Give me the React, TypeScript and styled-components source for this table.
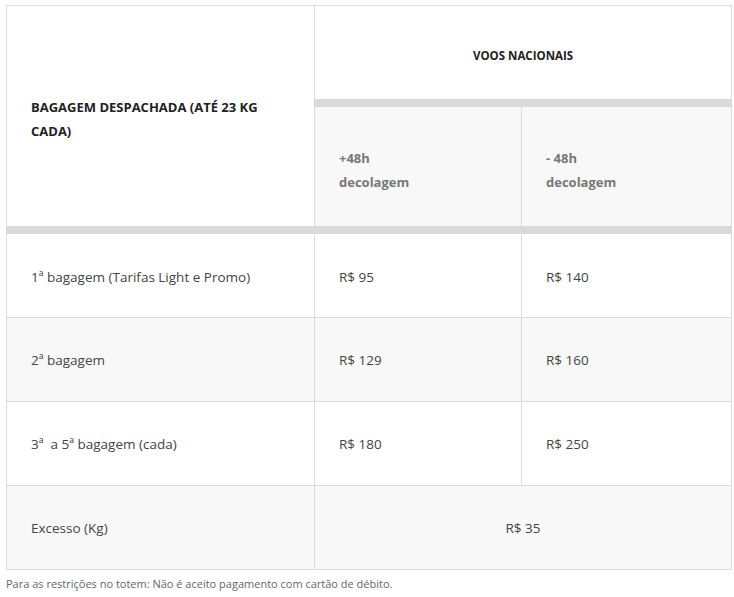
import React from "react";
import styled, { createGlobalStyle } from "styled-components";

const Global = createGlobalStyle`
  html, body { margin: 0; padding: 0; background: #fff; }
  body { font-family: "Open Sans", "Noto Sans", sans-serif; }
`;

const Page = styled.div`
  padding: 5px 0 0 6px;
`;

const Table = styled.table`
  border-collapse: collapse;
  width: 725px;
  table-layout: fixed;
  font-size: 13.5px;
  color: #444;
`;

const HeadRow = styled.tr<{ $h: number }>`
  height: ${(p) => p.$h}px;
`;

const HeadCell = styled.th<{ $center?: boolean; $shade?: boolean; $top?: number }>`
  border: 1px solid #dcdcdc;
  border-bottom: 8px solid #dadada;
  background: ${(p) => (p.$shade ? "#f8f8f8" : "#fff")};
  text-align: ${(p) => (p.$center ? "center" : "left")};
  padding: ${(p) => p.$top ?? 0}px 24px 0 24px;
  font-weight: 700;
  line-height: 24px;
  vertical-align: middle;
`;

const Title = styled.span<{ $small?: boolean }>`
  color: #222;
  font-size: ${(p) => (p.$small ? "11.5px" : "13px")};
  text-transform: uppercase;
`;

const Sub = styled.span`
  color: #777;
  font-size: 13px;
`;

const Row = styled.tr<{ $shade?: boolean; $first?: boolean }>`
  height: ${(p) => (p.$first ? 88 : 84)}px;
  background: ${(p) => (p.$shade ? "#f8f8f8" : "#fff")};
`;

const Cell = styled.td<{ $center?: boolean; $first?: boolean }>`
  border: 1px solid #dcdcdc;
  padding: ${(p) => (p.$first ? 4 : 0)}px 24px 0 24px;
  text-align: ${(p) => (p.$center ? "center" : "left")};
  vertical-align: middle;
`;

const Note = styled.p`
  margin: 6px 0 0 0;
  font-size: 11px;
  color: #666;
`;

const rows = [
  ["1ª bagagem (Tarifas Light e Promo)", "R$ 95", "R$ 140"],
  ["2ª bagagem", "R$ 129", "R$ 160"],
  ["3ª\u00a0 a 5ª bagagem (cada)", "R$ 180", "R$ 250"],
];

export default function App() {
  return (
    <Page>
      <Global />
      <Table>
        <colgroup>
          <col style={{ width: 308 }} />
          <col style={{ width: 207 }} />
          <col style={{ width: 210 }} />
        </colgroup>
        <thead>
          <HeadRow $h={97}>
            <HeadCell rowSpan={2} $top={6}>
              <Title>Bagagem despachada (até 23 kg cada)</Title>
            </HeadCell>
            <HeadCell colSpan={2} $center $top={6}>
              <Title $small>Voos nacionais</Title>
            </HeadCell>
          </HeadRow>
          <HeadRow $h={127}>
            <HeadCell $shade $top={8}>
              <Sub>+48h<br />decolagem</Sub>
            </HeadCell>
            <HeadCell $shade $top={8}>
              <Sub>- 48h<br />decolagem</Sub>
            </HeadCell>
          </HeadRow>
        </thead>
        <tbody>
          {rows.map((r, i) => (
            <Row key={i} $shade={i % 2 === 1} $first={i === 0}>
              <Cell $first={i === 0}>{r[0]}</Cell>
              <Cell $first={i === 0}>{r[1]}</Cell>
              <Cell $first={i === 0}>{r[2]}</Cell>
            </Row>
          ))}
          <Row $shade>
            <Cell>Excesso (Kg)</Cell>
            <Cell colSpan={2} $center>R$ 35</Cell>
          </Row>
        </tbody>
      </Table>
      <Note>Para as restrições no totem: Não é aceito pagamento com cartão de débito.</Note>
    </Page>
  );
}
